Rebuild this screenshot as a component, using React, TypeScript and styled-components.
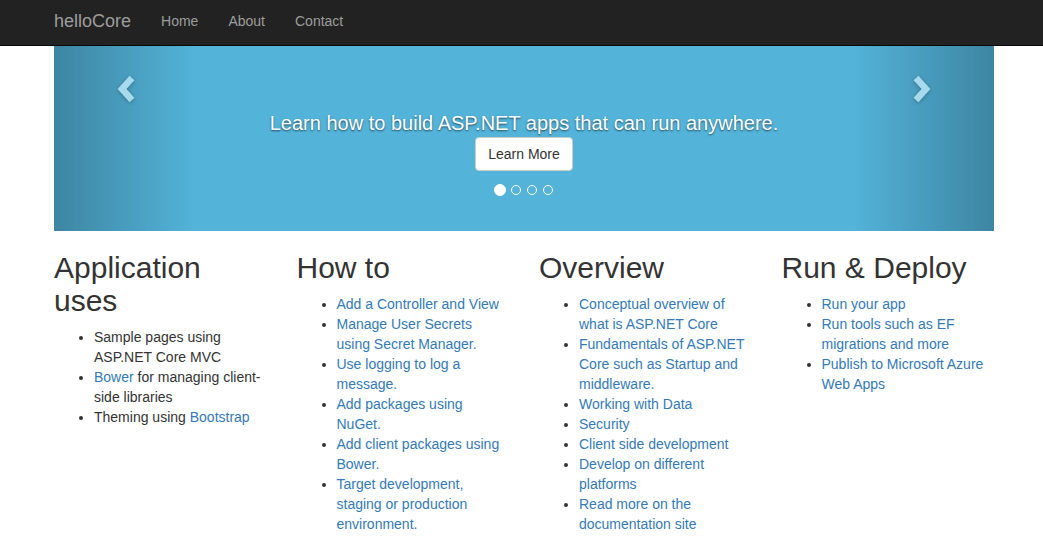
import styled, { createGlobalStyle } from 'styled-components';

const GlobalStyle = createGlobalStyle`
  html, body {
    margin: 0;
    padding: 0;
    background: #fff;
  }
  body {
    font-family: "Liberation Sans", Arial, Helvetica, sans-serif;
    font-size: 14px;
    line-height: 20px;
    color: #333;
  }
  a {
    color: #337ab7;
    text-decoration: none;
  }
`;

const Navbar = styled.nav`
  height: 46px;
  background: #222;
  border-bottom: 1px solid #080808;
  box-sizing: border-box;
`;

const Container = styled.div`
  width: 940px;
  margin-left: calc(50% - 467.5px);
`;

const NavInner = styled(Container)`
  display: flex;
  align-items: center;
  height: 45px;
`;

const Brand = styled.a`
  color: #9d9d9d;
  font-size: 18px;
  line-height: 20px;
  padding-right: 15px;
  margin-top: -4px;
`;

const NavLink = styled.a`
  color: #9d9d9d;
  font-size: 14px;
  line-height: 20px;
  padding: 0 15px;
  margin-top: -4px;
`;

const Carousel = styled.div`
  display: flex;
  height: 185px;
  background: #53b3d9;
  margin-bottom: 20px;
`;

const Control = styled.a<{ $side: 'left' | 'right' }>`
  width: 141px;
  flex: none;
  display: flex;
  justify-content: center;
  align-items: flex-start;
  padding-top: 28px;
  box-sizing: border-box;
  opacity: 0.5;
  background: linear-gradient(
    ${(p) => (p.$side === 'left' ? 'to right' : 'to left')},
    rgba(0, 0, 0, 0.5) 0%,
    rgba(0, 0, 0, 0) 100%
  );
  ${(p) => (p.$side === 'left' ? 'padding-left: 5px;' : 'padding-right: 5px;')}

  svg {
    filter: drop-shadow(0 1px 2px rgba(0, 0, 0, 0.6));
  }
`;

const Slide = styled.div`
  flex: 1;
  display: flex;
  flex-direction: column;
  align-items: center;
  padding-top: 63px;
`;

const Caption = styled.p`
  margin: 0;
  color: #fff;
  font-size: 20px;
  line-height: 28px;
  text-align: center;
  white-space: nowrap;
  text-shadow: 0 1px 2px rgba(0, 0, 0, 0.6);
`;

const Button = styled.a`
  display: inline-block;
  background: #fff;
  color: #333;
  border: 1px solid #ccc;
  border-radius: 4px;
  padding: 6px 12px;
  font-size: 14px;
  line-height: 20px;
`;

const Indicators = styled.ol`
  display: flex;
  align-items: center;
  gap: 4px;
  list-style: none;
  margin: 13px 0 0;
  padding: 0;
`;

const Dot = styled.li<{ $active?: boolean }>`
  box-sizing: border-box;
  border-radius: 50%;
  border: 1px solid #fff;
  width: ${(p) => (p.$active ? '12px' : '10px')};
  height: ${(p) => (p.$active ? '12px' : '10px')};
  margin: ${(p) => (p.$active ? '0' : '1px')};
  background: ${(p) => (p.$active ? '#fff' : 'transparent')};
`;

const Columns = styled(Container)`
  display: grid;
  grid-template-columns: repeat(4, 1fr);
  column-gap: 30px;
`;

const Heading = styled.h2`
  font-size: 30px;
  font-weight: 500;
  line-height: 33px;
  margin: 0 0 10px;
  color: #333;
`;

const List = styled.ul`
  margin: 0 0 10px;
  padding-left: 40px;
`;

const Chevron = ({ dir }: { dir: 'left' | 'right' }) => (
  <svg width="22" height="30" viewBox="0 0 22 30">
    <polyline
      points={dir === 'left' ? '16,4 6,15 16,26' : '6,4 16,15 6,26'}
      fill="none"
      stroke="#fff"
      strokeWidth="6.5"
      strokeLinejoin="miter"
    />
  </svg>
);

export default function App() {
  return (
    <>
      <GlobalStyle />
      <Navbar>
        <NavInner>
          <Brand>helloCore</Brand>
          <NavLink>Home</NavLink>
          <NavLink>About</NavLink>
          <NavLink>Contact</NavLink>
        </NavInner>
      </Navbar>
      <Container>
        <Carousel>
          <Control $side="left">
            <Chevron dir="left" />
          </Control>
          <Slide>
            <Caption>Learn how to build ASP.NET apps that can run anywhere.</Caption>
            <Button>Learn More</Button>
            <Indicators>
              <Dot $active />
              <Dot />
              <Dot />
              <Dot />
            </Indicators>
          </Slide>
          <Control $side="right">
            <Chevron dir="right" />
          </Control>
        </Carousel>
      </Container>
      <Columns>
        <div>
          <Heading>Application uses</Heading>
          <List>
            <li>Sample pages using ASP.NET Core MVC</li>
            <li>
              <a>Bower</a> for managing client-side libraries
            </li>
            <li>
              Theming using <a>Bootstrap</a>
            </li>
          </List>
        </div>
        <div>
          <Heading>How to</Heading>
          <List>
            <li><a>Add a Controller and View</a></li>
            <li><a>Manage User Secrets using Secret Manager.</a></li>
            <li><a>Use logging to log a message.</a></li>
            <li><a>Add packages using NuGet.</a></li>
            <li><a>Add client packages using Bower.</a></li>
            <li><a>Target development, staging or production environment.</a></li>
          </List>
        </div>
        <div>
          <Heading>Overview</Heading>
          <List>
            <li><a>Conceptual overview of what is ASP.NET Core</a></li>
            <li><a>Fundamentals of ASP.NET Core such as Startup and middleware.</a></li>
            <li><a>Working with Data</a></li>
            <li><a>Security</a></li>
            <li><a>Client side development</a></li>
            <li><a>Develop on different platforms</a></li>
            <li><a>Read more on the documentation site</a></li>
          </List>
        </div>
        <div>
          <Heading>Run &amp; Deploy</Heading>
          <List>
            <li><a>Run your app</a></li>
            <li><a>Run tools such as EF migrations and more</a></li>
            <li><a>Publish to Microsoft Azure Web Apps</a></li>
          </List>
        </div>
      </Columns>
    </>
  );
}
